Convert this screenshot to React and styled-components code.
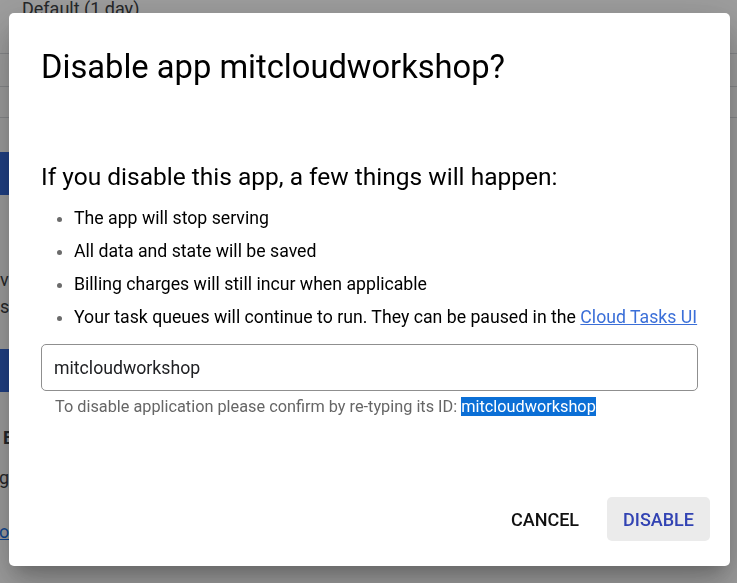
import React from "react";
import styled, { createGlobalStyle } from "styled-components";

const GlobalStyle = createGlobalStyle`
  html, body {
    margin: 0;
    height: 100%;
    overflow: hidden;
  }
  body {
    font-family: Roboto, "Noto Sans", sans-serif;
    background: #ffffff;
    color: #202124;
  }
`;

const BackgroundPage = styled.div`
  height: 583px;
  overflow: hidden;
  display: flex;
  flex-direction: column;
  margin-left: -60px;
`;

const FieldValue = styled.div`
  font-size: 18px;
  line-height: 20px;
  color: #3c4043;
  padding-left: 82px;
  margin-top: -1px;
  height: 54px;
`;

const Divider = styled.div`
  height: 1px;
  background: #dadce0;
  margin-bottom: ${(p) => p.$gap || 32}px;
`;

const PageButton = styled.div`
  width: 120px;
  height: 43px;
  border-radius: 4px;
  background: #3367d6;
  margin-top: ${(p) => p.$top || 0}px;
`;

const PageText = styled.div`
  font-size: 18px;
  line-height: 27px;
  white-space: nowrap;
  color: #3c4043;
  padding-left: ${(p) => p.$indent || 60}px;
  margin-top: ${(p) => p.$top || 0}px;
  font-weight: ${(p) => (p.$bold ? 700 : 400)};
`;

const PageLink = styled.span`
  color: #1a73e8;
  text-decoration: underline;
`;

const Overlay = styled.div`
  position: fixed;
  inset: 0;
  background: rgba(0, 0, 0, 0.38);
  display: flex;
  align-items: flex-start;
  padding: 13px 0 0 9px;
`;

const Dialog = styled.div`
  width: 721px;
  height: 553px;
  box-sizing: border-box;
  background: #ffffff;
  border-radius: 5px;
  box-shadow: 0 11px 15px -7px rgba(0, 0, 0, 0.2),
    0 24px 38px 3px rgba(0, 0, 0, 0.14), 0 9px 46px 8px rgba(0, 0, 0, 0.12);
  padding: 34px 32px 25px;
  display: flex;
  flex-direction: column;
`;

const Title = styled.h2`
  margin: 0;
  font-size: 32.7px;
  line-height: 40px;
  font-weight: 400;
  color: #000000;
`;

const Heading = styled.h3`
  margin: 74px 0 0;
  font-size: 24.5px;
  line-height: 32px;
  font-weight: 400;
  color: #000000;
`;

const Consequences = styled.ul`
  margin: 12px 0 0;
  padding-left: 33px;
`;

const Consequence = styled.li`
  font-size: 17.7px;
  line-height: 27px;
  margin-bottom: 6px;
  white-space: nowrap;
  color: #000000;

  &::marker {
    color: #6b6b6b;
  }
`;

const Link = styled.a`
  color: #3b6fd8;
  text-decoration: underline;
`;

const ConfirmInput = styled.input`
  margin-top: 7px;
  height: 47px;
  box-sizing: border-box;
  width: 100%;
  border: 1px solid #8f8f8f;
  border-radius: 5px;
  padding: 0 12px;
  font-family: Roboto, "Noto Sans", sans-serif;
  font-size: 17.7px;
  color: #202124;
  outline: none;
`;

const Hint = styled.div`
  margin-top: 6px;
  padding-left: 14px;
  font-size: 16.3px;
  line-height: 20px;
  color: #666666;
`;

const Selected = styled.span`
  background: #0b6fd6;
  color: #ffffff;
`;

const Actions = styled.div`
  margin-top: auto;
  display: flex;
  justify-content: flex-end;
  gap: 12px;
  margin-right: -12px;
`;

const ActionButton = styled.button`
  height: 44px;
  padding: 0 16px;
  border: none;
  border-radius: 5px;
  background: ${(p) => (p.$primary ? "#ebebeb" : "transparent")};
  color: ${(p) => (p.$primary ? "#3243b3" : "#111111")};
  font-family: Roboto, "Noto Sans", sans-serif;
  font-size: 18px;
  font-weight: 500;
  text-transform: uppercase;
  cursor: pointer;
`;

const App = () => {
  return (
    <>
      <GlobalStyle />
      <BackgroundPage>
        <FieldValue>Default (1 day)</FieldValue>
        <Divider $gap={32} />
        <Divider $gap={30} />
        <Divider $gap={34} />
        <PageButton />
        <PageText $top={71}>view traffic split</PageText>
        <PageText>stopped instances</PageText>
        <PageButton $top={29} />
        <PageText $top={32} $indent={63} $bold>
          Enable
        </PageText>
        <PageText $top={13} $indent={59}>
          ge settings
        </PageText>
        <PageText $top={27} $indent={59}>
          <PageLink>overview</PageLink>
        </PageText>
      </BackgroundPage>
      <Overlay>
        <Dialog role="dialog">
          <Title>Disable app mitcloudworkshop?</Title>
          <Heading>If you disable this app, a few things will happen:</Heading>
          <Consequences>
            <Consequence>The app will stop serving</Consequence>
            <Consequence>All data and state will be saved</Consequence>
            <Consequence>Billing charges will still incur when applicable</Consequence>
            <Consequence>
              Your task queues will continue to run. They can be paused in the{" "}
              <Link href="#">Cloud Tasks UI</Link>
            </Consequence>
          </Consequences>
          <ConfirmInput defaultValue="mitcloudworkshop" />
          <Hint>
            To disable application please confirm by re-typing its ID:{" "}
            <Selected>mitcloudworkshop</Selected>
          </Hint>
          <Actions>
            <ActionButton>Cancel</ActionButton>
            <ActionButton $primary>Disable</ActionButton>
          </Actions>
        </Dialog>
      </Overlay>
    </>
  );
};

export default App;
